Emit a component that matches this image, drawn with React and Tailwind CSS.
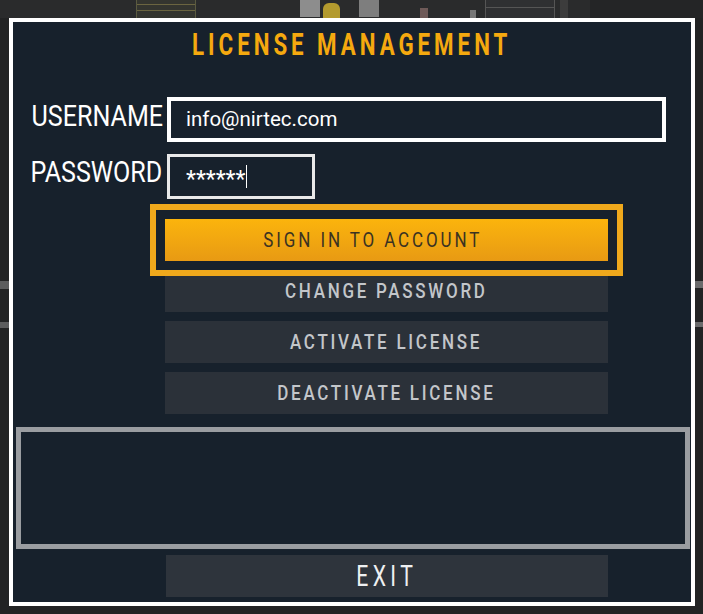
import React from "react";

const font = { fontFamily: "Roboto, 'Liberation Sans', sans-serif" };

function GrayButton({ children }) {
  return (
    <div className="w-[443px] h-[42px] bg-[#2b3139] flex items-center justify-center">
      <span className="inline-block text-[20px] leading-none font-medium tracking-[3.2px] text-[#c3c6ca] scale-x-[0.85] whitespace-nowrap">
        {children}
      </span>
    </div>
  );
}

export default function App() {
  return (
    <div
      className="relative w-[703px] h-[614px] overflow-hidden bg-[#222324] pt-[18px] pl-[9px]"
      style={font}
    >
      {/* background game scene (decorative) */}
      <div className="absolute left-0 top-0 w-[703px] h-[18px] bg-[#2a2b2c]">
        <div className="absolute left-[136px] top-0 w-[60px] h-[18px] bg-[#34352f] border-x border-[#5a5a40]">
          <div className="h-[5px] border-b border-[#6b6540]" />
          <div className="h-[6px] border-b border-[#6b6540]" />
        </div>
        <div className="absolute left-[300px] top-0 w-[20px] h-[17px] bg-[#8d8d8d]" />
        <div className="absolute left-[323px] top-[3px] w-[17px] h-[15px] bg-[#b39a2e] rounded-t-md" />
        <div className="absolute left-[359px] top-0 w-[20px] h-[17px] bg-[#7e7e7e]" />
        <div className="absolute left-[420px] top-[8px] w-[8px] h-[10px] bg-[#6e5a58]" />
        <div className="absolute left-[470px] top-[10px] w-[6px] h-[8px] bg-[#777]" />
        <div className="absolute left-[485px] top-0 w-[70px] h-[18px] bg-[#2f3032] border-x border-[#555]">
          <div className="h-[8px] border-b border-[#555]" />
        </div>
        <div className="absolute left-[560px] top-0 w-[8px] h-[18px] bg-[#3c3c3c]" />
        <div className="absolute left-[590px] top-0 w-[113px] h-[18px] bg-[#242526]" />
      </div>
      <div className="absolute left-0 top-[281px] w-[9px] h-[8px] bg-[#5c5d5e]" />
      <div className="absolute left-0 top-[322px] w-[9px] h-[6px] bg-[#5c5d5e]" />
      <div className="absolute right-0 top-[281px] w-[8px] h-[7px] bg-[#6a6b6c]" />
      <div className="absolute right-0 top-[322px] w-[8px] h-[5px] bg-[#6a6b6c]" />

      {/* dialog */}
      <div className="relative w-[686px] h-[588px] border-4 border-white bg-[#17212c] flex flex-col">
        <div className="mt-[7px] flex justify-center">
          <span className="inline-block text-[31px] leading-none font-bold text-[#f5a90f] tracking-[5.5px] scale-x-[0.72] whitespace-nowrap">
            LICENSE MANAGEMENT
          </span>
        </div>

        <div className="mt-[37px] flex items-center">
          <div className="w-[150px] flex justify-end -mt-[7px]">
            <span className="inline-block text-[29px] leading-none text-white scale-x-[0.865] origin-right whitespace-nowrap">
              USERNAME
            </span>
          </div>
          <div className="ml-[4px] w-[499px] h-[45px] border-4 border-white flex items-center pl-[15px]">
            <span className="text-[20.5px] leading-none text-white">info@nirtec.com</span>
          </div>
        </div>

        <div className="mt-[12px] flex items-center">
          <div className="w-[149px] flex justify-end -mt-[8px]">
            <span className="inline-block text-[29px] leading-none text-white scale-x-[0.865] origin-right whitespace-nowrap">
              PASSWORD
            </span>
          </div>
          <div className="ml-[5px] w-[148px] h-[45px] border-[3px] border-[#e9e9e9] flex items-center pl-[16px]">
            <span className="text-[23px] leading-none text-white pt-[6px]">******</span>
            <span className="ml-[1px] w-[1px] h-[23px] bg-white" />
          </div>
        </div>

        <div className="mt-[20px] ml-[152px] flex flex-col gap-[9px]">
          <div className="relative z-10 w-[443px] h-[42px] pr-[28px] bg-gradient-to-b from-[#fbb40c] to-[#e89a13] outline-[6px] outline-solid outline-[#f0a91c] outline-offset-[9px] flex items-center justify-center">
            <span className="inline-block text-[20px] leading-none tracking-[3.4px] text-[#3b3322] scale-x-[0.85] whitespace-nowrap">
              SIGN IN TO ACCOUNT
            </span>
          </div>
          <GrayButton>CHANGE PASSWORD</GrayButton>
          <GrayButton>ACTIVATE LICENSE</GrayButton>
          <GrayButton>DEACTIVATE LICENSE</GrayButton>
        </div>

        <div className="mt-[13px] ml-[3px] w-[674px] h-[122px] border-[5px] border-[#9a9da1]" />

        <div className="mt-[6px] ml-[153px] w-[442px] h-[42px] bg-[#2e343c] flex items-center justify-center">
          <span className="inline-block text-[29px] leading-none tracking-[6px] text-[#eef0f2] scale-x-[0.73] whitespace-nowrap">
            EXIT
          </span>
        </div>
      </div>
    </div>
  );
}
